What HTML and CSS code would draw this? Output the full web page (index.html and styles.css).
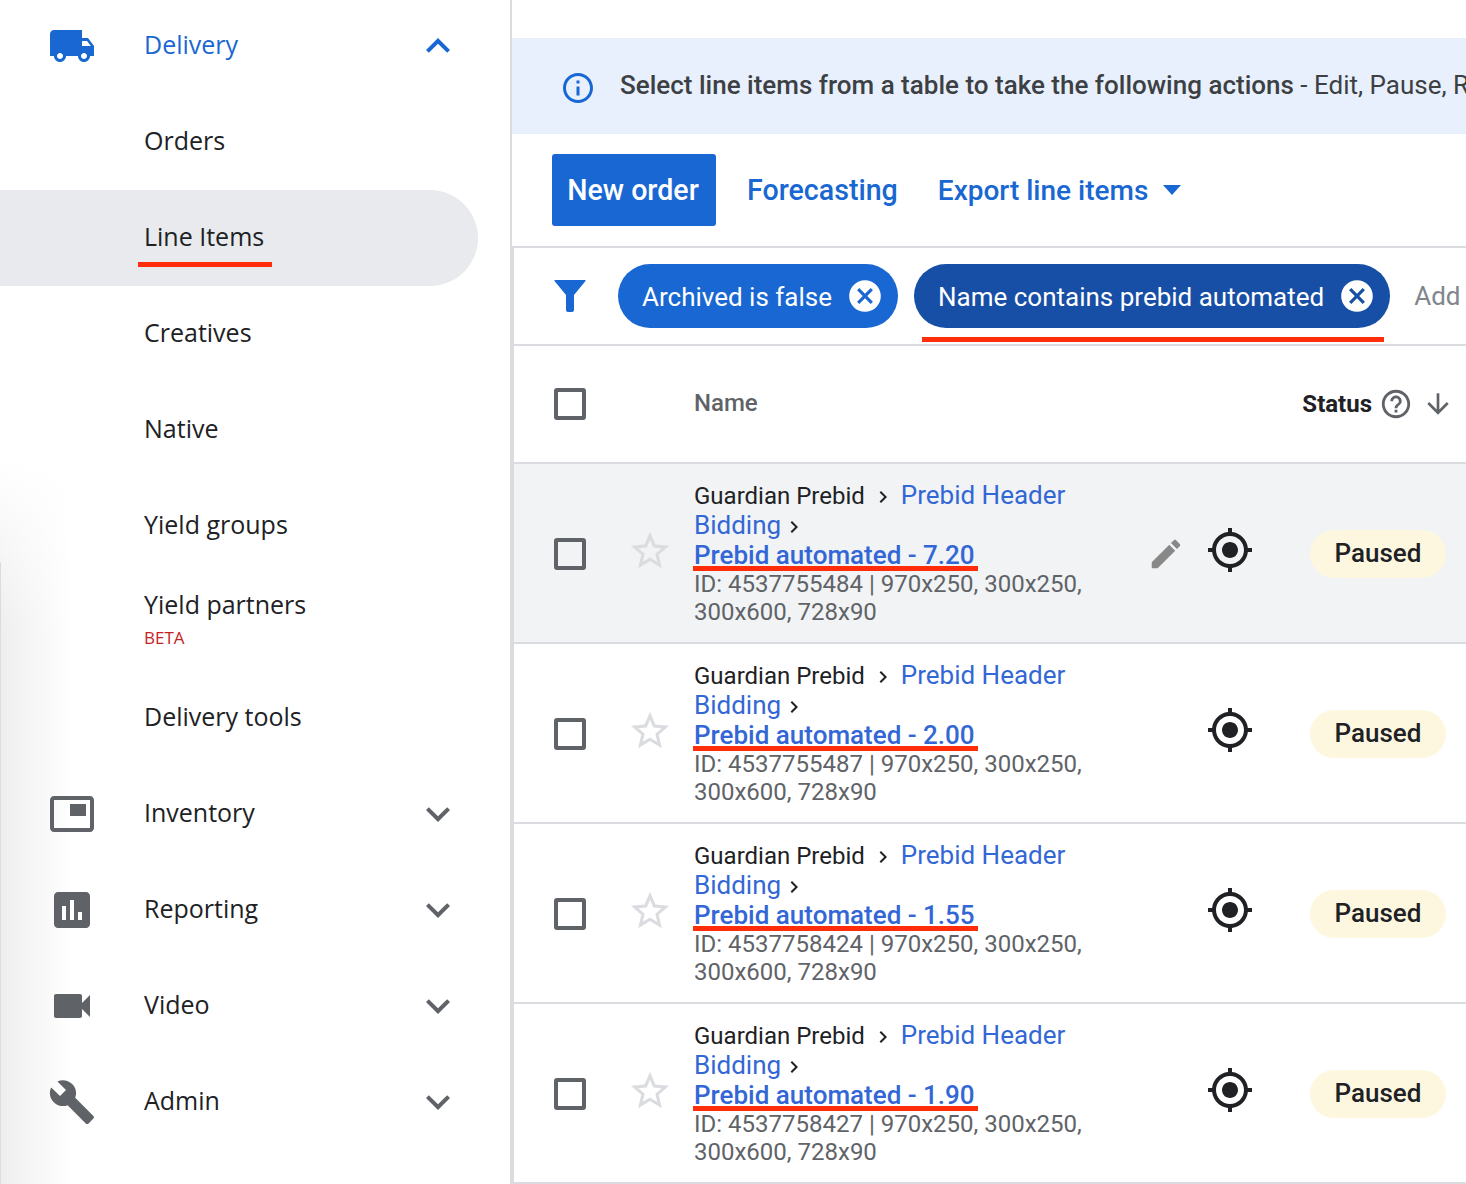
FILE: index.html
```html
<!DOCTYPE html>
<html lang="en">
<head>
    <meta charset="UTF-8">
    <meta name="viewport" content="width=device-width, initial-scale=1.0">
    <title>Line Items</title>
    <link rel="stylesheet" href="styles.css">
</head>
<body>
    <nav class="sidebar">
        <div class="nav-item nav-first active-group">
            <svg class="nav-icon" viewBox="0 0 24 24"><path d="M20 8h-3V4H3c-1.1 0-2 .9-2 2v11h2c0 1.66 1.34 3 3 3s3-1.34 3-3h6c0 1.66 1.34 3 3 3s3-1.34 3-3h2v-5l-3-4zM6 18.5c-.83 0-1.5-.67-1.5-1.5s.67-1.5 1.5-1.5 1.5.67 1.5 1.5-.67 1.5-1.5 1.5zm13.5-9l1.96 2.5H17V9.5h2.5zm-1.5 9c-.83 0-1.5-.67-1.5-1.5s.67-1.5 1.5-1.5 1.5.67 1.5 1.5-.67 1.5-1.5 1.5z"/></svg>
            <span class="nav-label">Delivery</span>
            <svg class="nav-arrow" viewBox="0 0 24 24"><path d="M7.41 15.41L12 10.83l4.59 4.58L18 14l-6-6-6 6z"/></svg>
        </div>
        <div class="nav-item"><span class="nav-label">Orders</span></div>
        <div class="nav-item nav-selected"><span class="nav-label">Line Items<span class="red-mark mark-nav"></span></span></div>
        <div class="nav-item"><span class="nav-label">Creatives</span></div>
        <div class="nav-item"><span class="nav-label">Native</span></div>
        <div class="nav-item"><span class="nav-label">Yield groups</span></div>
        <div class="nav-item nav-partners">
            <span class="nav-label">Yield partners<small class="beta">BETA</small></span>
        </div>
        <div class="nav-item"><span class="nav-label">Delivery tools</span></div>
        <div class="nav-item">
            <svg class="nav-icon" viewBox="0 0 24 24"><path d="M19 7h-8v6h8V7zm2-4H3c-1.1 0-2 .9-2 2v14c0 1.1.9 2 2 2h18c1.1 0 2-.9 2-2V5c0-1.1-.9-2-2-2zm0 16.01H3V4.98h18v14.03z"/></svg>
            <span class="nav-label">Inventory</span>
            <svg class="nav-arrow" viewBox="0 0 24 24"><path d="M7.41 8.59L12 13.17l4.59-4.58L18 10l-6 6-6-6z"/></svg>
        </div>
        <div class="nav-item">
            <svg class="nav-icon" viewBox="0 0 24 24"><path d="M19 3H5c-1.1 0-2 .9-2 2v14c0 1.1.9 2 2 2h14c1.1 0 2-.9 2-2V5c0-1.1-.9-2-2-2zM9 17H7v-7h2v7zm4 0h-2V7h2v10zm4 0h-2v-4h2v4z"/></svg>
            <span class="nav-label">Reporting</span>
            <svg class="nav-arrow" viewBox="0 0 24 24"><path d="M7.41 8.59L12 13.17l4.59-4.58L18 10l-6 6-6-6z"/></svg>
        </div>
        <div class="nav-item">
            <svg class="nav-icon" viewBox="0 0 24 24"><path d="M17 10.5V7c0-.55-.45-1-1-1H4c-.55 0-1 .45-1 1v10c0 .55.45 1 1 1h12c.55 0 1-.45 1-1v-3.5l4 4v-11l-4 4z"/></svg>
            <span class="nav-label">Video</span>
            <svg class="nav-arrow" viewBox="0 0 24 24"><path d="M7.41 8.59L12 13.17l4.59-4.58L18 10l-6 6-6-6z"/></svg>
        </div>
        <div class="nav-item">
            <svg class="nav-icon" viewBox="0 0 24 24"><path d="M22.7 19l-9.1-9.1c.9-2.3.4-5-1.5-6.9-2-2-5-2.4-7.4-1.3L9 6 6 9 1.6 4.7C.4 7.1.9 10.1 2.9 12.1c1.9 1.9 4.6 2.4 6.9 1.5l9.1 9.1c.4.4 1 .4 1.4 0l2.3-2.3c.5-.4.5-1.1.1-1.4z"/></svg>
            <span class="nav-label">Admin</span>
            <svg class="nav-arrow" viewBox="0 0 24 24"><path d="M7.41 8.59L12 13.17l4.59-4.58L18 10l-6 6-6-6z"/></svg>
        </div>
    </nav>

    <main class="content">
        <div class="banner">
            <svg class="banner-icon" viewBox="0 0 24 24"><path d="M11 7h2v2h-2zm0 4h2v6h-2zm1-9C6.48 2 2 6.48 2 12s4.48 10 10 10 10-4.48 10-10S17.52 2 12 2zm0 18c-4.41 0-8-3.59-8-8s3.59-8 8-8 8 3.59 8 8-3.59 8-8 8z"/></svg>
            <p class="banner-text"><strong>Select line items from a table to take the following actions</strong> - Edit, Pause, Resume, Archive</p>
        </div>

        <div class="toolbar">
            <button class="btn-primary">New order</button>
            <a class="btn-link">Forecasting</a>
            <a class="btn-link btn-export">Export line items<span class="caret"></span></a>
        </div>

        <div class="filter-bar">
            <svg class="filter-icon" viewBox="0 0 32 32"><path d="M1 0h30q1 0 .5 1L20 15v15q0 2-2 2h-4q-2 0-2-2V15L.5 1Q0 0 1 0z"/></svg>
            <span class="chip"><span>Archived is false</span>
                <svg class="chip-x" viewBox="0 0 24 24"><path d="M12 2C6.47 2 2 6.47 2 12s4.47 10 10 10 10-4.47 10-10S17.53 2 12 2zm5 13.59L15.59 17 12 13.41 8.41 17 7 15.59 10.59 12 7 8.41 8.41 7 12 10.59 15.59 7 17 8.41 13.41 12 17 15.59z"/></svg>
            </span>
            <span class="chip chip-dark"><span>Name contains prebid automated</span>
                <svg class="chip-x" viewBox="0 0 24 24"><path d="M12 2C6.47 2 2 6.47 2 12s4.47 10 10 10 10-4.47 10-10S17.53 2 12 2zm5 13.59L15.59 17 12 13.41 8.41 17 7 15.59 10.59 12 7 8.41 8.41 7 12 10.59 15.59 7 17 8.41 13.41 12 17 15.59z"/></svg>
                <span class="red-mark mark-chip"></span>
            </span>
            <span class="filter-add">Add filter</span>
        </div>

        <div class="table-head">
            <span class="checkbox"></span>
            <span class="head-name">Name</span>
            <span class="head-status">Status</span>
            <svg class="help-icon" viewBox="0 0 24 24"><path d="M11 18h2v-2h-2v2zm1-16C6.48 2 2 6.48 2 12s4.48 10 10 10 10-4.48 10-10S17.52 2 12 2zm0 18c-4.41 0-8-3.59-8-8s3.59-8 8-8 8 3.59 8 8-3.59 8-8 8zm0-14c-2.21 0-4 1.79-4 4h2c0-1.1.9-2 2-2s2 .9 2 2c0 2-3 1.75-3 5h2c0-2.25 3-2.5 3-5 0-2.21-1.79-4-4-4z"/></svg>
            <svg class="sort-icon" viewBox="0 0 24 24"><path d="M20 12l-1.41-1.41L13 16.17V4h-2v12.17l-5.58-5.59L4 12l8 8 8-8z"/></svg>
        </div>

        <div class="row row-hover">
            <span class="checkbox"></span>
            <svg class="star" viewBox="0 0 24 24"><path d="M22 9.24l-7.19-.62L12 2 9.19 8.63 2 9.24l5.46 4.73L5.82 21 12 17.27 18.18 21l-1.63-7.03L22 9.24zM12 15.4l-3.76 2.27 1-4.28-3.32-2.88 4.38-.38L12 6.1l1.71 4.04 4.38.38-3.32 2.88 1 4.28L12 15.4z"/></svg>
            <div class="name-cell">
                <div class="crumbs"><span class="crumb-order">Guardian Prebid</span><svg class="sep" viewBox="0 0 24 24"><path d="M10 6L8.59 7.41 13.17 12l-4.58 4.59L10 18l6-6z"/></svg><a class="crumb-link">Prebid Header</a> <a class="crumb-link">Bidding</a><svg class="sep-end" viewBox="0 0 24 24"><path d="M10 6L8.59 7.41 13.17 12l-4.58 4.59L10 18l6-6z"/></svg></div>
                <a class="item-link">Prebid automated - 7.20<span class="red-mark mark-link"></span></a>
                <div class="item-meta">ID: 4537755484 | 970x250, 300x250, 300x600, 728x90</div>
            </div>
            <svg class="edit-icon" viewBox="0 0 24 24"><path d="M3 17.25V21h3.75L17.81 9.94l-3.75-3.75L3 17.25zM20.71 7.04c.39-.39.39-1.02 0-1.41l-2.34-2.34c-.39-.39-1.02-.39-1.41 0l-1.83 1.83 3.75 3.75 1.83-1.83z"/></svg>
            <svg class="target-icon" viewBox="0 0 24 24"><path d="M12 8c-2.21 0-4 1.79-4 4s1.79 4 4 4 4-1.79 4-4-1.79-4-4-4zm8.94 3c-.46-4.17-3.77-7.48-7.94-7.94V1h-2v2.06C6.83 3.52 3.52 6.83 3.06 11H1v2h2.06c.46 4.17 3.77 7.48 7.94 7.94V23h2v-2.06c4.17-.46 7.48-3.77 7.94-7.94H23v-2h-2.06zM12 19c-3.87 0-7-3.13-7-7s3.13-7 7-7 7 3.13 7 7-3.13 7-7 7z"/></svg>
            <span class="status-pill">Paused</span>
        </div>

        <div class="row">
            <span class="checkbox"></span>
            <svg class="star" viewBox="0 0 24 24"><path d="M22 9.24l-7.19-.62L12 2 9.19 8.63 2 9.24l5.46 4.73L5.82 21 12 17.27 18.18 21l-1.63-7.03L22 9.24zM12 15.4l-3.76 2.27 1-4.28-3.32-2.88 4.38-.38L12 6.1l1.71 4.04 4.38.38-3.32 2.88 1 4.28L12 15.4z"/></svg>
            <div class="name-cell">
                <div class="crumbs"><span class="crumb-order">Guardian Prebid</span><svg class="sep" viewBox="0 0 24 24"><path d="M10 6L8.59 7.41 13.17 12l-4.58 4.59L10 18l6-6z"/></svg><a class="crumb-link">Prebid Header</a> <a class="crumb-link">Bidding</a><svg class="sep-end" viewBox="0 0 24 24"><path d="M10 6L8.59 7.41 13.17 12l-4.58 4.59L10 18l6-6z"/></svg></div>
                <a class="item-link">Prebid automated - 2.00<span class="red-mark mark-link"></span></a>
                <div class="item-meta">ID: 4537755487 | 970x250, 300x250, 300x600, 728x90</div>
            </div>
            <span class="edit-slot"></span>
            <svg class="target-icon" viewBox="0 0 24 24"><path d="M12 8c-2.21 0-4 1.79-4 4s1.79 4 4 4 4-1.79 4-4-1.79-4-4-4zm8.94 3c-.46-4.17-3.77-7.48-7.94-7.94V1h-2v2.06C6.83 3.52 3.52 6.83 3.06 11H1v2h2.06c.46 4.17 3.77 7.48 7.94 7.94V23h2v-2.06c4.17-.46 7.48-3.77 7.94-7.94H23v-2h-2.06zM12 19c-3.87 0-7-3.13-7-7s3.13-7 7-7 7 3.13 7 7-3.13 7-7 7z"/></svg>
            <span class="status-pill">Paused</span>
        </div>

        <div class="row">
            <span class="checkbox"></span>
            <svg class="star" viewBox="0 0 24 24"><path d="M22 9.24l-7.19-.62L12 2 9.19 8.63 2 9.24l5.46 4.73L5.82 21 12 17.27 18.18 21l-1.63-7.03L22 9.24zM12 15.4l-3.76 2.27 1-4.28-3.32-2.88 4.38-.38L12 6.1l1.71 4.04 4.38.38-3.32 2.88 1 4.28L12 15.4z"/></svg>
            <div class="name-cell">
                <div class="crumbs"><span class="crumb-order">Guardian Prebid</span><svg class="sep" viewBox="0 0 24 24"><path d="M10 6L8.59 7.41 13.17 12l-4.58 4.59L10 18l6-6z"/></svg><a class="crumb-link">Prebid Header</a> <a class="crumb-link">Bidding</a><svg class="sep-end" viewBox="0 0 24 24"><path d="M10 6L8.59 7.41 13.17 12l-4.58 4.59L10 18l6-6z"/></svg></div>
                <a class="item-link">Prebid automated - 1.55<span class="red-mark mark-link"></span></a>
                <div class="item-meta">ID: 4537758424 | 970x250, 300x250, 300x600, 728x90</div>
            </div>
            <span class="edit-slot"></span>
            <svg class="target-icon" viewBox="0 0 24 24"><path d="M12 8c-2.21 0-4 1.79-4 4s1.79 4 4 4 4-1.79 4-4-1.79-4-4-4zm8.94 3c-.46-4.17-3.77-7.48-7.94-7.94V1h-2v2.06C6.83 3.52 3.52 6.83 3.06 11H1v2h2.06c.46 4.17 3.77 7.48 7.94 7.94V23h2v-2.06c4.17-.46 7.48-3.77 7.94-7.94H23v-2h-2.06zM12 19c-3.87 0-7-3.13-7-7s3.13-7 7-7 7 3.13 7 7-3.13 7-7 7z"/></svg>
            <span class="status-pill">Paused</span>
        </div>

        <div class="row">
            <span class="checkbox"></span>
            <svg class="star" viewBox="0 0 24 24"><path d="M22 9.24l-7.19-.62L12 2 9.19 8.63 2 9.24l5.46 4.73L5.82 21 12 17.27 18.18 21l-1.63-7.03L22 9.24zM12 15.4l-3.76 2.27 1-4.28-3.32-2.88 4.38-.38L12 6.1l1.71 4.04 4.38.38-3.32 2.88 1 4.28L12 15.4z"/></svg>
            <div class="name-cell">
                <div class="crumbs"><span class="crumb-order">Guardian Prebid</span><svg class="sep" viewBox="0 0 24 24"><path d="M10 6L8.59 7.41 13.17 12l-4.58 4.59L10 18l6-6z"/></svg><a class="crumb-link">Prebid Header</a> <a class="crumb-link">Bidding</a><svg class="sep-end" viewBox="0 0 24 24"><path d="M10 6L8.59 7.41 13.17 12l-4.58 4.59L10 18l6-6z"/></svg></div>
                <a class="item-link">Prebid automated - 1.90<span class="red-mark mark-link"></span></a>
                <div class="item-meta">ID: 4537758427 | 970x250, 300x250, 300x600, 728x90</div>
            </div>
            <span class="edit-slot"></span>
            <svg class="target-icon" viewBox="0 0 24 24"><path d="M12 8c-2.21 0-4 1.79-4 4s1.79 4 4 4 4-1.79 4-4-1.79-4-4-4zm8.94 3c-.46-4.17-3.77-7.48-7.94-7.94V1h-2v2.06C6.83 3.52 3.52 6.83 3.06 11H1v2h2.06c.46 4.17 3.77 7.48 7.94 7.94V23h2v-2.06c4.17-.46 7.48-3.77 7.94-7.94H23v-2h-2.06zM12 19c-3.87 0-7-3.13-7-7s3.13-7 7-7 7 3.13 7 7-3.13 7-7 7z"/></svg>
            <span class="status-pill">Paused</span>
        </div>
    </main>
</body>
</html>
```

FILE: styles.css
```css
* {
    box-sizing: border-box;
}
html, body {
    height: 100%;
}
body {
    margin: 0;
    display: flex;
    overflow: hidden;
    background: white;
    font-family: Roboto, Arial, sans-serif;
    color: #202124;
}

/* left navigation */
.sidebar {
    position: relative;
    flex: 0 0 512px;
    height: 1184px;
    padding-right: 32px;
    border-right: 2px solid #dadce0;
    font-family: "Open Sans", Arial, sans-serif;
}
/* soft shadow from the window behind, lower left */
.sidebar::before {
    content: "";
    position: absolute;
    left: 0;
    top: 460px;
    bottom: 0;
    width: 72px;
    background: linear-gradient(to right, #eeeeee, rgba(255, 255, 255, 0));
    -webkit-mask-image: linear-gradient(to bottom, transparent, black 170px);
    mask-image: linear-gradient(to bottom, transparent, black 170px);
}
.sidebar::after {
    content: "";
    position: absolute;
    left: 0;
    top: 562px;
    bottom: 0;
    width: 1px;
    background: #dcdcdc;
}
.nav-item {
    position: relative;
    height: 96px;
    display: flex;
    align-items: center;
    padding: 0 0 4px 144px;
    font-size: 25px;
}
.nav-first {
    height: 94px;
    padding-bottom: 6px;
    color: #1967d2;
}
.nav-first .nav-icon, .nav-first .nav-arrow {
    fill: #1967d2;
}
.nav-partners {
    padding-bottom: 0;
}
.nav-selected {
    background: #e8eaed;
    border-radius: 0 48px 48px 0;
}
.nav-icon {
    position: absolute;
    left: 48px;
    width: 48px;
    height: 48px;
    margin-top: 4px;
    fill: #5f6368;
}
.nav-arrow {
    position: absolute;
    left: 414px;
    width: 48px;
    height: 48px;
    margin-top: 4px;
    fill: #5f6368;
}
.nav-label {
    position: relative;
    display: block;
    line-height: 32px;
}
.beta {
    display: block;
    font-size: 17px;
    line-height: 36px;
    color: #c5221f;
}
.red-mark {
    position: absolute;
    height: 5px;
    background: #ff2d0a;
}
.mark-nav {
    left: -6px;
    right: -8px;
    top: 42px;
}

/* right side */
.content {
    flex: 1;
    min-width: 0;
    padding-top: 38px;
}
.banner {
    height: 96px;
    display: flex;
    align-items: center;
    padding-left: 48px;
    background: #e8f0fe;
    white-space: nowrap;
    overflow: hidden;
}
.banner-icon {
    flex: none;
    width: 36px;
    height: 36px;
    margin: 4px 24px 0 0;
    fill: #1967d2;
}
.banner-text {
    margin: -2px 0 0;
    font-size: 26px;
    color: #3c4043;
}
.banner-text strong {
    font-weight: 500;
}
.toolbar {
    height: 112px;
    display: flex;
    align-items: center;
    gap: 31px;
    padding-left: 40px;
}
.btn-primary {
    width: 164px;
    height: 72px;
    padding: 0 2px 0 0;
    border: none;
    border-radius: 3px;
    background: #1967d2;
    color: white;
    font: 500 28.6px Roboto, Arial, sans-serif;
}
.btn-link {
    display: flex;
    align-items: center;
    color: #1967d2;
    font-size: 28.6px;
    font-weight: 500;
}
.btn-export {
    margin-left: 9px;
    font-size: 28px;
}
.caret {
    width: 0;
    height: 0;
    margin-left: 15px;
    border-left: 9.5px solid transparent;
    border-right: 9.5px solid transparent;
    border-top: 10px solid #1967d2;
}
.filter-bar {
    height: 100px;
    display: flex;
    align-items: center;
    padding-left: 40px;
    border: 2px solid #dadce0;
    border-width: 2px 0 2px 2px;
    white-space: nowrap;
}
.filter-icon {
    flex: none;
    width: 32px;
    height: 32px;
    margin-right: 32px;
    fill: #1967d2;
}
.chip {
    position: relative;
    flex: none;
    height: 64px;
    display: flex;
    align-items: center;
    padding: 0 14px 0 24px;
    border-radius: 32px;
    background: #1967d2;
    color: white;
    font-size: 26px;
    margin-right: 16px;
}
.chip > span:first-child {
    padding-top: 2px;
}
.chip-dark {
    background: #174ea6;
}
.chip-x {
    width: 38px;
    height: 38px;
    margin-left: 14px;
    fill: white;
}
.mark-chip {
    left: 8px;
    right: 6px;
    top: 73px;
}
.filter-add {
    margin-left: 8px;
    font-size: 26px;
    color: #80868b;
}
.table-head {
    height: 118px;
    display: flex;
    align-items: center;
    padding-left: 40px;
    border-left: 2px solid #dadce0;
    border-bottom: 2px solid #dadce0;
}
.checkbox {
    flex: none;
    width: 32px;
    height: 32px;
    border: 4px solid #5f6368;
    border-radius: 3px;
}
.head-name {
    margin: 0 0 2px 108px;
    font-size: 24px;
    font-weight: 500;
    color: #5f6368;
}
.head-status {
    margin-left: auto;
    font-size: 24px;
    font-weight: 700;
}
.help-icon {
    width: 34px;
    height: 34px;
    margin-left: 7px;
    fill: #5f6368;
}
.sort-icon {
    width: 32px;
    height: 32px;
    margin: 0 12px 0 9px;
    fill: #5f6368;
}
.row {
    height: 180px;
    display: flex;
    align-items: center;
    padding: 2px 0 0 40px;
    border-left: 2px solid #dadce0;
    border-bottom: 2px solid #dadce0;
}
.row-hover {
    background: #f1f3f4;
}
.star {
    flex: none;
    width: 46px;
    height: 46px;
    margin: -6px 0 0 41px;
    fill: #dadce0;
}
.name-cell {
    flex: none;
    width: 394px;
    margin: -2px 0 0 21px;
    font-size: 24px;
    line-height: 30px;
}
.crumbs {
    font-size: 26px;
}
.crumb-order {
    font-size: 24px;
    line-height: 1;
}
.crumb-link {
    color: #3367d6;
}
.sep, .sep-end {
    width: 24px;
    height: 24px;
    vertical-align: -5px;
    fill: #202124;
}
.sep {
    margin: 0 6px;
}
.sep-end {
    margin-left: 1px;
}
.item-link {
    position: relative;
    display: block;
    width: fit-content;
    color: #3367d6;
    font-size: 26px;
    font-weight: 500;
    text-decoration: underline;
}
.mark-link {
    left: -1px;
    right: -3px;
    top: 26px;
}
.item-meta {
    line-height: 28px;
    color: #5f6368;
}
.edit-icon, .edit-slot {
    flex: none;
    width: 38px;
    height: 38px;
    margin-left: 59px;
    fill: #888;
}
.target-icon {
    flex: none;
    width: 48px;
    height: 48px;
    margin: -8px 0 0 21px;
    fill: #202124;
}
.status-pill {
    flex: none;
    width: 136px;
    height: 48px;
    display: flex;
    align-items: center;
    justify-content: center;
    margin-left: 56px;
    padding-bottom: 2px;
    border-radius: 24px;
    background: #fef7e0;
    font-size: 26px;
    font-weight: 500;
}
```
